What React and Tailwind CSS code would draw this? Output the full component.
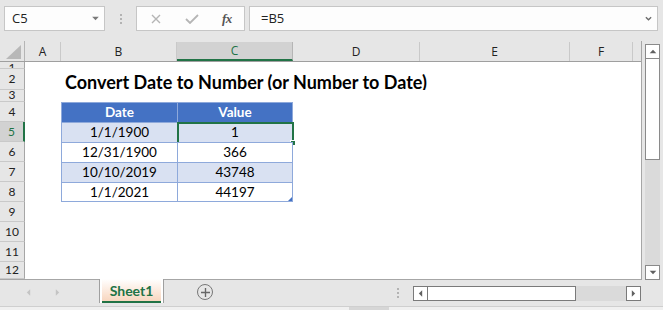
import React from "react";

const cols = [
  { key: "A", w: "w-[36px]" },
  { key: "B", w: "w-[116px]" },
  { key: "C", w: "w-[116px]" },
  { key: "D", w: "w-[127px]" },
  { key: "E", w: "w-[150px]" },
  { key: "F", w: "w-[63px]" },
];

const rows = [
  { n: 1, h: "h-[7px]", align: "items-start" },
  { n: 2, h: "h-[21px]", title: true },
  { n: 3, h: "h-[12px]", align: "items-end" },
  { n: 4, h: "h-[20px]", head: true },
  { n: 5, h: "h-[20px]", b: "1/1/1900", c: "1", band: true, sel: true },
  { n: 6, h: "h-[20px]", b: "12/31/1900", c: "366" },
  { n: 7, h: "h-[20px]", b: "10/10/2019", c: "43748", band: true },
  { n: 8, h: "h-[20px]", b: "1/1/2021", c: "44197", last: true },
  { n: 9, h: "h-[20px]" },
  { n: 10, h: "h-[20px]" },
  { n: 11, h: "h-[20px]" },
  { n: 12, h: "h-[17px]" },
];

const Tri = ({ dir, className }) => {
  const pts = {
    up: "0,5 8,5 4,1",
    down: "0,1 8,1 4,5",
    left: "5,0 5,8 1,4",
    right: "1,0 1,8 5,4",
  }[dir];
  const vb = dir === "up" || dir === "down" ? "0 0 8 6" : "0 0 6 8";
  return (
    <svg viewBox={vb} className={className}>
      <polygon points={pts} fill="currentColor" />
    </svg>
  );
};

const FormulaBar = () => (
  <div className="h-[41px] flex items-start pt-[6px] pl-[4px]">
    <div className="w-[101px] h-[25px] bg-[#fdfdfd] border border-[#c6c6c6] flex items-center justify-between pl-[7px] pr-[5px] text-[13px] text-[#222]">
      <span>C5</span>
      <Tri dir="down" className="w-[7px] h-[5px] text-[#7a7a7a]" />
    </div>
    <div className="w-[31px] h-[25px] flex flex-col items-center justify-center gap-[2px]">
      <span className="w-[2px] h-[2px] bg-[#b3b3b3]" />
      <span className="w-[2px] h-[2px] bg-[#b3b3b3]" />
      <span className="w-[2px] h-[2px] bg-[#b3b3b3]" />
    </div>
    <div className="w-[109px] h-[25px] bg-[#fdfdfd] border border-[#c6c6c6] flex items-center">
      <svg viewBox="0 0 10 10" className="w-[10px] h-[10px] ml-[14px]">
        <path d="M1 1L9 9M9 1L1 9" stroke="#b5b5b5" strokeWidth="1.4" />
      </svg>
      <svg viewBox="0 0 14 10" className="w-[14px] h-[10px] ml-[24px]">
        <path d="M1 5L5 9L13 1" stroke="#b5b5b5" strokeWidth="1.8" fill="none" />
      </svg>
      <span className="ml-[23px] italic text-[13px] text-[#555] font-['Liberation_Serif',serif] font-bold tracking-[-0.5px]">
        fx
      </span>
    </div>
    <div className="ml-[4px] w-[409px] h-[25px] bg-[#fdfdfd] border border-[#c6c6c6] flex items-center justify-between pl-[11px] pr-[5px] text-[13px] text-[#222]">
      <span>=B5</span>
      <svg viewBox="0 0 8 5" className="w-[7px] h-[5px]">
        <path d="M1 1L4 4L7 1" stroke="#6a6a6a" strokeWidth="1.5" fill="none" />
      </svg>
    </div>
  </div>
);

const HeaderRow = () => (
  <div className="h-[21px] flex border-b border-[#9f9f9f] text-[12px] text-[#222]">
    <div className="w-[25px] border-r border-[#b5b5b5] flex items-end justify-end pr-[3px] pb-[2px]">
      <svg viewBox="0 0 15 14" className="w-[15px] h-[14px]">
        <polygon points="0,14 15,14 15,0" fill="#b8b8b8" />
      </svg>
    </div>
    {cols.map((c) =>
      c.key === "C" ? (
        <div
          key={c.key}
          className={`${c.w} bg-[#d2d2d2] border-r border-[#b5b5b5] border-b-2 border-b-[#217346] flex items-center justify-center text-[#217346] mt-[1px]`}
        >
          {c.key}
        </div>
      ) : (
        <div key={c.key} className={`${c.w} border-r border-[#c9c9c9] flex items-center justify-center mt-[1px]`}>
          {c.key}
        </div>
      )
    )}
    <div className="flex-1" />
  </div>
);

const SheetRow = ({ r }) => {
  const inTable = r.head || r.b;
  const fill = r.head ? "bg-[#4472c4] text-white font-bold" : r.band ? "bg-[#d9e1f2]" : "bg-white";
  return (
    <div className={`${r.h} flex`}>
      <div
        className={`w-[25px] shrink-0 overflow-hidden border-b border-[#c9c9c9] flex ${r.align || "items-center"} justify-center text-[12px] leading-[12px] ${
          r.sel ? "bg-[#d2d2d2] text-[#217346] border-r-2 border-r-[#217346]" : "bg-[#e6e6e6] text-[#222] border-r border-r-[#a6a6a6]"
        }`}
      >
        {r.n}
      </div>
      <div className="w-[36px] shrink-0 bg-white" />
      {inTable ? (
        <>
          <div
            className={`w-[116px] shrink-0 border-l border-t border-[#8ea9db] ${r.last ? "border-b" : ""} ${fill} flex items-center justify-center`}
          >
            {r.head ? "Date" : r.b}
          </div>
          <div
            className={`relative w-[116px] shrink-0 border-l border-r border-t border-[#8ea9db] ${r.last ? "border-b" : ""} ${fill} flex items-center justify-center`}
          >
            {r.head ? "Value" : r.c}
            {r.sel && (
              <>
                <div className="absolute -left-[1px] -top-[1px] -right-[2px] -bottom-[2px] border-2 border-[#217346]" />
                <div className="absolute -right-[4px] -bottom-[4px] w-[6px] h-[6px] bg-[#217346] border border-white" />
              </>
            )}
            {r.last && (
              <svg viewBox="0 0 4 4" className="absolute right-[0px] bottom-[0px] w-[4px] h-[4px]">
                <polygon points="0,4 4,4 4,0" fill="#4472c4" />
              </svg>
            )}
          </div>
        </>
      ) : (
        <div className="relative flex-1 bg-white">
          {r.title && (
            <span className="absolute left-[4px] top-[0px] whitespace-nowrap font-bold text-[18px] text-black">
              Convert Date to Number (or Number to Date)
            </span>
          )}
        </div>
      )}
      {inTable && <div className="flex-1 bg-white" />}
    </div>
  );
};

const VScroll = () => (
  <div className="ml-[3px] w-[15px] flex flex-col">
    <div className="mt-[3px] h-[15px] border border-[#8a8a8a] bg-white flex items-center justify-center">
      <Tri dir="up" className="w-[8px] h-[5px] text-[#606060]" />
    </div>
    <div className="h-[101px] border border-t-0 border-[#8a8a8a] bg-white" />
    <div className="flex-1 bg-[#dadada]" />
    <div className="h-[15px] border border-[#8a8a8a] bg-white flex items-center justify-center">
      <Tri dir="down" className="w-[8px] h-[5px] text-[#606060]" />
    </div>
  </div>
);

const TabBar = () => (
  <div className="h-[26px] flex items-start">
    <div className="w-[99px] h-[24px] flex items-center">
      <Tri dir="left" className="ml-[26px] w-[5px] h-[7px] text-[#c4c4c4]" />
      <Tri dir="right" className="ml-[24px] w-[5px] h-[7px] text-[#c4c4c4]" />
    </div>
    <div className="w-[65px] h-[24px] border-l border-r border-[#9f9f9f] bg-white px-[2px] pb-0 -mt-[1px]">
      <div className="h-full border-b-2 border-[#217346] bg-gradient-to-b from-white to-[#f8d6bf] flex items-center justify-center text-[14px] font-bold text-[#217346]">
        Sheet1
      </div>
    </div>
    <div className="ml-[33px] mt-[4px] w-[16px] h-[16px] rounded-full border-[1.5px] border-[#777] flex items-center justify-center">
      <svg viewBox="0 0 10 10" className="w-[9px] h-[9px]">
        <path d="M5 0V10M0 5H10" stroke="#666" strokeWidth="1.5" />
      </svg>
    </div>
    <div className="ml-[184px] mt-[8px] flex flex-col gap-[2px]">
      <span className="w-[2px] h-[2px] bg-[#b3b3b3]" />
      <span className="w-[2px] h-[2px] bg-[#b3b3b3]" />
      <span className="w-[2px] h-[2px] bg-[#b3b3b3]" />
    </div>
    <div className="ml-[14px] mt-[6px] flex h-[15px]">
      <div className="w-[15px] border border-[#7a7a7a] bg-white flex items-center justify-center">
        <Tri dir="left" className="w-[5px] h-[7px] text-[#606060]" />
      </div>
      <div className="w-[148px] border-y border-r border-[#7a7a7a] bg-white" />
      <div className="w-[50px] bg-[#dadada]" />
      <div className="w-[15px] border border-[#7a7a7a] bg-white flex items-center justify-center">
        <Tri dir="right" className="w-[5px] h-[7px] text-[#606060]" />
      </div>
    </div>
  </div>
);

export default function App() {
  return (
    <div className="w-[663px] h-[310px] overflow-hidden bg-[#e6e6e6] font-['Lato',sans-serif] text-[13.5px] text-black">
      <div className="font-['Open_Sans',sans-serif]">
        <FormulaBar />
      </div>
      <div className="flex">
        <div className="w-[642px] border-r border-[#a6a6a6]">
          <div className="font-['Open_Sans',sans-serif]">
            <HeaderRow />
          </div>
          <div className="border-b border-[#a6a6a6]">
            {rows.map((r) => (
              <SheetRow key={r.n} r={r} />
            ))}
          </div>
        </div>
        <VScroll />
      </div>
      <TabBar />
      <div className="h-[4px] border-t border-[#cfcfcf] bg-[#f0f0f0] flex">
        <div className="ml-[349px] w-[40px] bg-[#d6d6d6]" />
      </div>
    </div>
  );
}
